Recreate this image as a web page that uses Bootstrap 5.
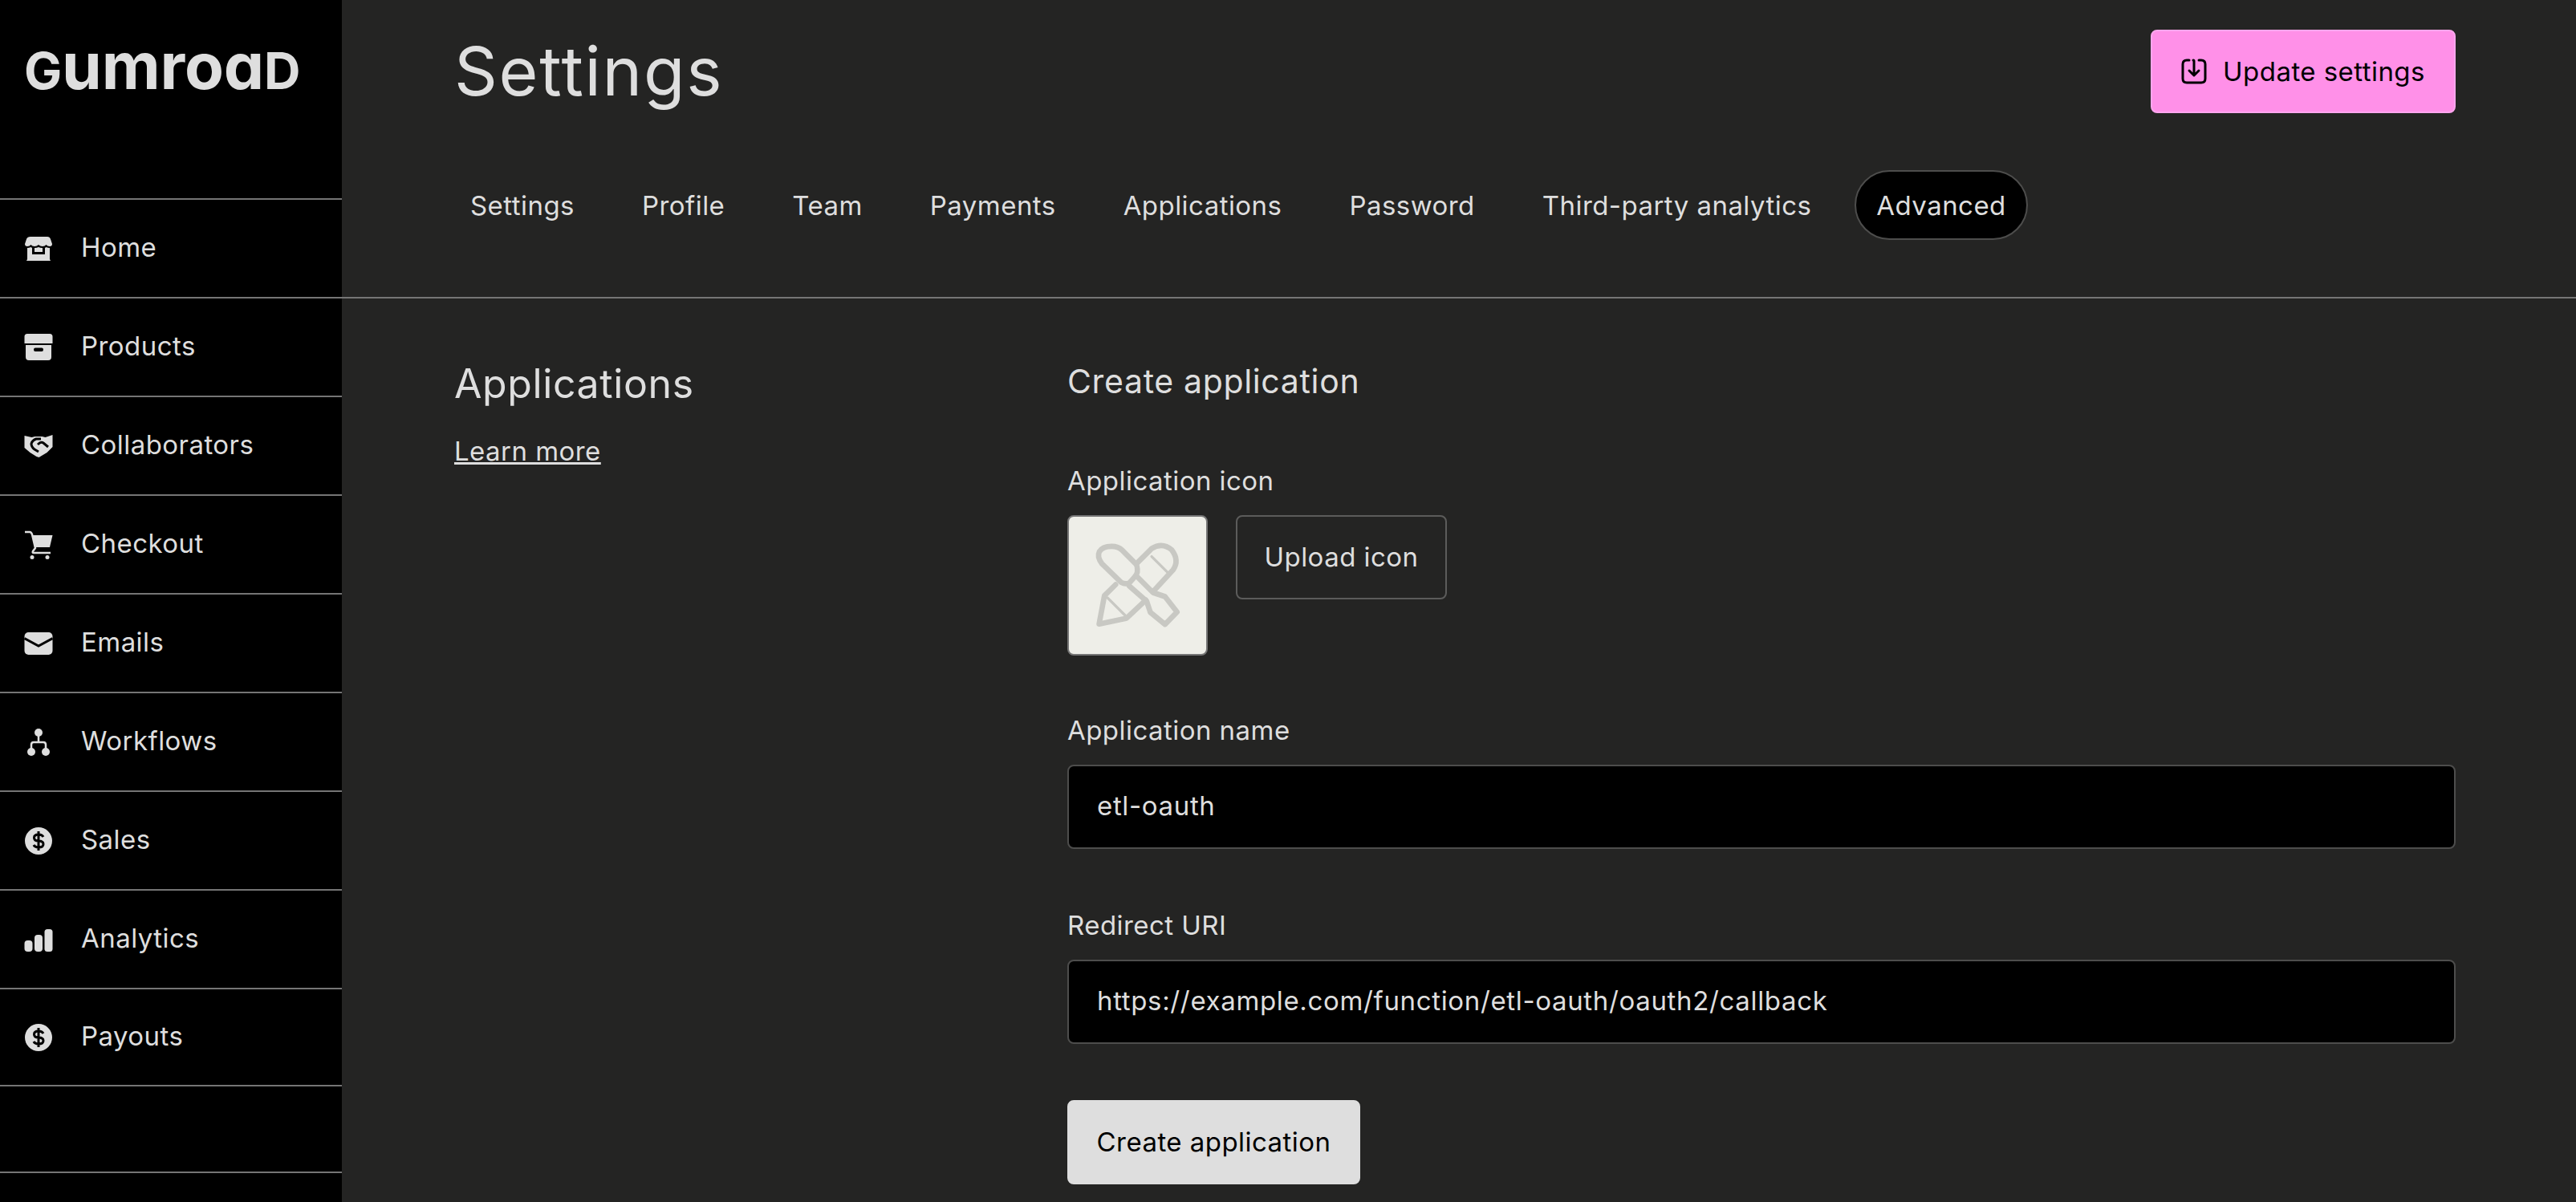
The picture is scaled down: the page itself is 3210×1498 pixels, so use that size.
<!DOCTYPE html>
<html lang="en">
<head>
    <meta charset="utf-8">
    <title>Settings - Gumroad</title>
    <link href="https://cdn.jsdelivr.net/npm/bootstrap@5.3.0/dist/css/bootstrap.min.css" rel="stylesheet">
    <style>
        body { background: #242423; color: #dedede; font-family: Inter, "Liberation Sans", sans-serif; font-size: 33px; letter-spacing: .45px; line-height: 40px; height: 1498px; overflow: hidden; }
        svg { display: block; flex: none; }

        .side-bar { width: 426px; height: 1498px; background: #000; flex: none; }
        .brand { height: 247px; padding: 42px 0 0 30px; font-weight: 700; font-size: 80px; line-height: 80px; letter-spacing: -.2px; color: #dedede; font-feature-settings: "cv11"; white-space: nowrap; }
        .brand span { font-size: 63px; }
        .side-link { height: 123px; border-top: 2px solid #757575; padding-left: 30px; gap: 35px; color: #dedede; text-decoration: none; }
        .side-link span { margin-top: -3px; }
        .side-link:last-of-type { height: 121px; }
        .side-end { border-top: 2px solid #757575; }
        .side-gap { height: 108px; }

        .page-head { height: 372px; padding: 37px 150px 0 566px; margin-left: -426px; border-bottom: 2px solid #757575; }
        .page-title { font-size: 84px; letter-spacing: 1.7px; line-height: 104px; font-weight: 400; margin: 0; }
        .btn-pink { background: #ff90e8; border: 2px solid #ffa6ee; color: #000; font-size: 33px; letter-spacing: .45px; line-height: 40px; height: 104px; width: 380px; border-radius: 8px; gap: 20px; }
        .tab-row { margin: 71px 0 0 -8px; gap: 28px; }
        .tab-link { height: 87px; padding: 0 26px; border: 2px solid transparent; border-radius: 44px; color: #dedede; font-size: 33px; letter-spacing: .45px; text-decoration: none; }
        .tab-link.active { background: #000; border-color: #4d4d4c; color: #dedede; padding: 0 25px; margin-left: -2px; }

        .main-area { padding: 76px 150px 0 140px; }
        .intro-col { width: 764px; flex: none; }
        .intro-col h2 { font-size: 50px; letter-spacing: .6px; line-height: 60px; font-weight: 400; margin: 0 0 34px; }
        .intro-col a { color: #dedede; }
        .form-col h3 { font-size: 41px; letter-spacing: .65px; line-height: 48px; font-weight: 400; margin: 3px 0 80px; }
        .field-label { display: block; margin-bottom: 23px; }
        .field-gap { margin-top: 73px; }
        .form-control + .field-gap { margin-top: 75px; }
        .form-col .form-control { height: 105px; background: #000; border: 2px solid #4d4d4c; border-radius: 8px; color: #dedede; font-size: 33px; letter-spacing: .65px; padding: 0 35px 3px; }
        .icon-box { width: 175px; height: 175px; background: #eeeee8; border: 2px solid #757575; border-radius: 8px; }
        .btn-upload { height: 105px; width: 263px; margin-left: 35px; background: transparent; border: 2px solid #5c5c5b; border-radius: 8px; color: #dedede; font-size: 33px; letter-spacing: .45px; }
        .btn-create { margin-top: 70px; height: 105px; width: 365px; background: #dedede; border: 2px solid #dedede; border-radius: 8px; color: #000; font-size: 33px; letter-spacing: .45px; }
    </style>
</head>
<body>
<div class="d-flex">
    <aside class="side-bar d-flex flex-column">
        <div class="brand"><span>G</span>umroa<span>D</span></div>
        <nav class="d-flex flex-column">
            <a class="side-link d-flex align-items-center" href="#">
                <svg width="36" height="36" viewBox="0 0 36 36" fill="#dedede"><path fill-rule="evenodd" d="M8 3h21q3 0 4 3l2 6q0 3-3 3-3 0-4.500-2-1.500 2-4.500 2t-5-2q-2 2-5 2t-4.500-2Q7 15 4 15q-3 0-3-3l2-6q1-3 5-3zM4 17q3 0 4-1 1 .5 2 .8V25h16v-8.200q1-.3 2-.8 1 1 4 1v14l1 2H3l1-2zM13 17q3 0 5-1 2 1 5 1v5H13z"/></svg>
                <span>Home</span>
            </a>
            <a class="side-link d-flex align-items-center" href="#">
                <svg width="36" height="36" viewBox="0 0 36 36" fill="#dedede"><path fill-rule="evenodd" d="M4 1h28q3.500 0 3.500 3.500V13H.5V4.500Q.5 1 4 1zM2 15h32v15q0 4-4 4H6q-4 0-4-4zM14 18.500q-2 0-2 2.250T14 23h8q2 0 2-2.250t-2-2.250z"/></svg>
                <span>Products</span>
            </a>
            <a class="side-link d-flex align-items-center" href="#">
                <svg width="36" height="36" viewBox="0 0 36 36"><path fill="#dedede" d="M.5 5l9 2 4-1h9l4 1 9-3v15l-7 7-10 6-3-1-8-5-7-6z"/><path fill="none" stroke="#000" stroke-width="3" d="M21 9h-6q-5 2-6 6 0 4 4 7l5 3M17 16q4-4 7-2l6 5"/></svg>
                <span>Collaborators</span>
            </a>
            <a class="side-link d-flex align-items-center" href="#">
                <svg width="36" height="36" viewBox="0 0 36 36" fill="#dedede"><path d="M10 6h25.500L32 21H13z"/><path fill="none" stroke="#dedede" stroke-width="2.500" d="M1 2h6q2 0 3 3l4 17-3 4q-1 2 1 2h21"/><circle cx="10" cy="33.500" r="2.500"/><circle cx="29" cy="33.500" r="2.500"/></svg>
                <span>Checkout</span>
            </a>
            <a class="side-link d-flex align-items-center" href="#">
                <svg width="36" height="36" viewBox="0 0 36 36" fill="#dedede"><rect x=".5" y="4" width="35" height="28" rx="5"/><path fill="none" stroke="#000" stroke-width="3" d="M.5 11.500L18 21l17.500-9.500"/></svg>
                <span>Emails</span>
            </a>
            <a class="side-link d-flex align-items-center" href="#">
                <svg width="36" height="36" viewBox="0 0 36 36" fill="#dedede"><circle cx="18" cy="6" r="5"/><circle cx="9" cy="30" r="5"/><circle cx="27" cy="30" r="5"/><path fill="none" stroke="#dedede" stroke-width="2.500" d="M18 9v9M9 26v-5q0-3 3-3h12q3 0 3 3v5"/></svg>
                <span>Workflows</span>
            </a>
            <a class="side-link d-flex align-items-center" href="#">
                <svg width="36" height="36" viewBox="0 0 36 36"><circle cx="18" cy="18" r="17" fill="#dedede"/><path fill="none" stroke="#000" stroke-width="3" d="M24 13q-1.500-3-6-3-5.500 0-5.500 4t5.500 4q6 0 6 4t-6 4q-4.500 0-6-3M18 6v24"/></svg>
                <span>Sales</span>
            </a>
            <a class="side-link d-flex align-items-center" href="#">
                <svg width="36" height="36" viewBox="0 0 36 36" fill="#dedede"><rect x=".5" y="19" width="10" height="14" rx="4"/><rect x="13" y="12" width="10" height="21" rx="4"/><rect x="25.500" y="5" width="10" height="28" rx="3.500"/></svg>
                <span>Analytics</span>
            </a>
            <a class="side-link d-flex align-items-center" href="#">
                <svg width="36" height="36" viewBox="0 0 36 36"><circle cx="18" cy="18" r="17" fill="#dedede"/><path fill="none" stroke="#000" stroke-width="3" d="M24 13q-1.500-3-6-3-5.500 0-5.500 4t5.500 4q6 0 6 4t-6 4q-4.500 0-6-3M18 6v24"/></svg>
                <span>Payouts</span>
            </a>
            <div class="side-end side-gap"></div>
            <div class="side-end"></div>
        </nav>
    </aside>

    <main class="flex-grow-1">
        <header class="page-head">
            <div class="d-flex justify-content-between align-items-start">
                <h1 class="page-title">Settings</h1>
                <button class="btn btn-pink d-flex align-items-center justify-content-center" type="button">
                    <svg width="32" height="32" viewBox="0 0 32 32" fill="none" stroke="#000" stroke-width="3" stroke-linecap="round" stroke-linejoin="round"><path d="M10 2H7Q2 2 2 7v18q0 5 5 5h18q5 0 5-5V7q0-5-5-5h-3"/><path d="M15 2q1 0 1 1v17M10 15l6 6 6-6"/></svg>
                    <span>Update settings</span>
                </button>
            </div>
            <nav class="tab-row d-flex">
                <a class="tab-link d-flex align-items-center" href="#">Settings</a>
                <a class="tab-link d-flex align-items-center" href="#">Profile</a>
                <a class="tab-link d-flex align-items-center" href="#">Team</a>
                <a class="tab-link d-flex align-items-center" href="#">Payments</a>
                <a class="tab-link d-flex align-items-center" href="#">Applications</a>
                <a class="tab-link d-flex align-items-center" href="#">Password</a>
                <a class="tab-link d-flex align-items-center" href="#">Third-party analytics</a>
                <a class="tab-link active d-flex align-items-center" href="#">Advanced</a>
            </nav>
        </header>

        <section class="main-area d-flex">
            <div class="intro-col">
                <h2>Applications</h2>
                <a href="#">Learn more</a>
            </div>
            <form class="form-col flex-grow-1">
                <h3>Create application</h3>
                <label class="field-label">Application icon</label>
                <div class="d-flex align-items-start">
                    <div class="icon-box d-flex align-items-center justify-content-center">
                        <svg width="171" height="171" viewBox="95 71 514 514" fill="none" stroke="#c8c8c3" stroke-width="20" stroke-linejoin="round" stroke-linecap="round">
                            <path d="M270 325l-42 42-20 106 103-22 72-68"/>
                            <path d="M350 245l55-55q40-25 75 5 30 40 5 75l-72 78"/>
                            <path d="M255 182q25 0 40 15l50 50q8 8 6 32-3 12-30 40-15 6-30-2l-72-70q-20-25-10-45 12-20 46-20z"/>
                            <path d="M350 295l60 60 45 15 45 58-45 46-55-45-14-42-65-57"/>
                            <path stroke-width="10" d="M405 220l65 65M240 375l65 65"/>
                        </svg>
                    </div>
                    <button class="btn btn-upload" type="button">Upload icon</button>
                </div>
                <label class="field-label field-gap" for="app-name">Application name</label>
                <input class="form-control" id="app-name" type="text" value="etl-oauth">
                <label class="field-label field-gap" for="app-uri">Redirect URI</label>
                <input class="form-control" id="app-uri" type="text" value="https://example.com/function/etl-oauth/oauth2/callback">
                <button class="btn btn-create" type="button">Create application</button>
            </form>
        </section>
    </main>
</div>
</body>
</html>
